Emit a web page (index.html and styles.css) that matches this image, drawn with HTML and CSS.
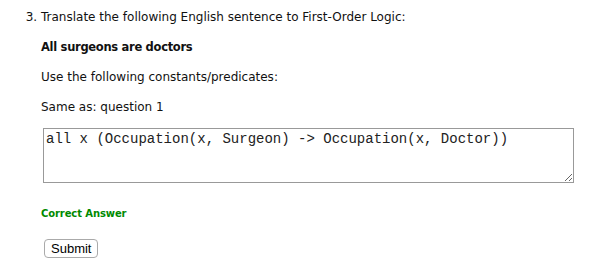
FILE: index.html
```html
<!DOCTYPE html>
<html lang="en">
<head>
    <meta charset="UTF-8">
    <title>Question 3</title>
    <link rel="stylesheet" href="styles.css">
</head>
<body>

    <ol class="questions" start="3">
        <li>
            <p>Translate the following English sentence to First-Order Logic:</p>
            <p class="sentence">All surgeons are doctors</p>
            <p>Use the following constants/predicates:</p>
            <p>Same as: question 1</p>

            <form class="answer-form">
                <textarea class="answer" rows="3">all x (Occupation(x, Surgeon) -&gt; Occupation(x, Doctor))</textarea>
                <p class="feedback">Correct Answer</p>
                <button type="button" class="submit">Submit</button>
            </form>
        </li>
    </ol>

</body>
</html>
```

FILE: styles.css
```css
body {
    margin: 0;
    font-family: "DejaVu Sans", Verdana, sans-serif;
    font-size: 12px;
    color: #111;
}
.questions {
    margin: 10px 0 0 0;
    padding-left: 41px;
}
p {
    margin: 15px 0 0 0;
    line-height: 15px;
}
.questions li > p:first-child {
    margin-top: 0;
}
.sentence {
    font-weight: bold;
    font-size: 11.5px;
    letter-spacing: -0.3px;
}
.answer-form {
    margin: 0;
}
.answer {
    display: block;
    box-sizing: border-box;
    width: 531px;
    height: 55px;
    margin: 13px 0 0 2px;
    padding: 2px;
    border: 1px solid #999;
    font-family: "Liberation Mono", "Courier New", monospace;
    font-size: 14px;
    color: #222;
}
.feedback {
    margin-top: 23px;
    color: #008a00;
    font-weight: bold;
    font-size: 10px;
    letter-spacing: -0.1px;
}
.submit {
    display: block;
    margin: 18px 0 0 3px;
    height: 19px;
    padding: 0 6px;
    background: #fff;
    border: 1px solid #aaa;
    border-radius: 4px;
    font-family: "Liberation Sans", Arial, sans-serif;
    font-size: 13px;
    color: #000;
}
```
